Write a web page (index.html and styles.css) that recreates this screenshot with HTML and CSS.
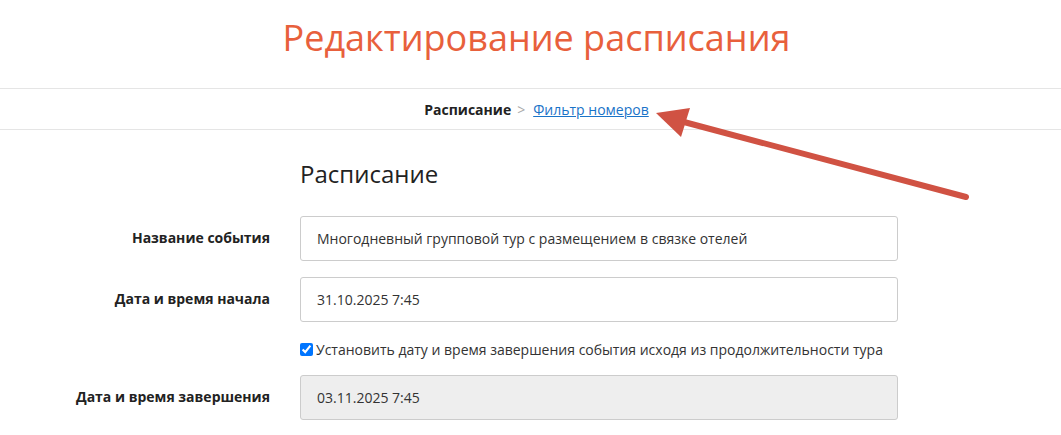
FILE: index.html
```html
<!DOCTYPE html>
<html lang="ru">
<head>
    <meta charset="UTF-8">
    <meta name="viewport" content="width=device-width, initial-scale=1.0">
    <title>Редактирование расписания</title>
    <link rel="stylesheet" href="styles.css">
</head>
<body>
    <header class="page-header">
        <h1>Редактирование расписания</h1>
    </header>

    <nav class="breadcrumbs">
        <span class="crumb-current">Расписание</span>
        <span class="crumb-sep">&gt;</span>
        <a href="#" class="crumb-link">Фильтр номеров</a>
    </nav>

    <form class="schedule-form">
        <div class="form-row">
            <div></div>
            <h2 class="form-title">Расписание</h2>
        </div>

        <div class="form-row">
            <label class="form-label" for="event-name">Название события</label>
            <input class="form-input" id="event-name" type="text" value="Многодневный групповой тур с размещением в связке отелей">
        </div>

        <div class="form-row">
            <label class="form-label" for="date-start">Дата и время начала</label>
            <input class="form-input" id="date-start" type="text" value="31.10.2025 7:45">
        </div>

        <div class="form-row check-row">
            <div></div>
            <label class="check-label">
                <input type="checkbox" checked>
                Установить дату и время завершения события исходя из продолжительности тура
            </label>
        </div>

        <div class="form-row">
            <label class="form-label" for="date-end">Дата и время завершения</label>
            <input class="form-input" id="date-end" type="text" value="03.11.2025 7:45" disabled>
        </div>
    </form>

    <!-- стрелка-пометка поверх страницы -->
    <svg class="pointer-arrow" width="1061" height="435" viewBox="0 0 1061 435">
        <line x1="966" y1="197" x2="684" y2="122" stroke="#d05243" stroke-width="6" stroke-linecap="round"/>
        <polygon points="656,113 690,108 681,137" fill="#d05243"/>
    </svg>
</body>
</html>
```

FILE: styles.css
```css
:root {
    --accent-color: #e8603c;
    --text-color: #333333;
    --border-color: #e5e5e5;
    --input-border: #cccccc;
    --link-color: #1a73c8;
}

body {
    margin: 0;
    font-family: "Open Sans", Arial, sans-serif;
    color: var(--text-color);
    background-color: #fff;
    position: relative;
    overflow: hidden;
    height: 435px;
}

.page-header {
    height: 88px;
    display: flex;
    justify-content: center;
    padding-left: 12px;
}

h1 {
    margin: 0;
    padding-top: 13px;
    font-size: 36px;
    font-weight: 400;
    line-height: 50px;
    color: var(--accent-color);
}

.breadcrumbs {
    height: 40px;
    border-top: 1px solid var(--border-color);
    border-bottom: 1px solid var(--border-color);
    display: flex;
    justify-content: center;
    align-items: center;
    gap: 6px;
    font-size: 14px;
    padding-left: 12px;
}

.crumb-current {
    font-weight: 700;
    color: #222;
}

.crumb-sep {
    color: #aaa;
    margin-right: 2px;
}

.crumb-link {
    color: var(--link-color);
}

.schedule-form {
    display: flex;
    flex-direction: column;
    gap: 16px;
    padding-top: 26px;
}

.form-row {
    display: grid;
    grid-template-columns: 270px 598px;
    column-gap: 30px;
    align-items: center;
}

.form-title {
    margin: 0 0 8px;
    font-size: 24px;
    font-weight: 400;
    line-height: 36px;
    color: #222;
}

.form-label {
    text-align: right;
    font-size: 14px;
    font-weight: 700;
    color: #222;
    margin-top: -3px;
}

.form-input {
    box-sizing: border-box;
    height: 45px;
    padding: 0 16px;
    border: 1px solid var(--input-border);
    border-radius: 3px;
    font-family: inherit;
    font-size: 14px;
    color: var(--text-color);
    background-color: #fff;
}

.form-input:disabled {
    background-color: #eeeeee;
    color: var(--text-color);
}

.check-row {
    margin: 2px 0 0;
}

.check-label {
    font-size: 14px;
    display: flex;
    align-items: center;
    gap: 3px;
    color: var(--text-color);
}

.check-label input {
    margin: 0;
    width: 13px;
    height: 13px;
}

.pointer-arrow {
    position: absolute;
    top: 0;
    left: 0;
    pointer-events: none;
}
```
